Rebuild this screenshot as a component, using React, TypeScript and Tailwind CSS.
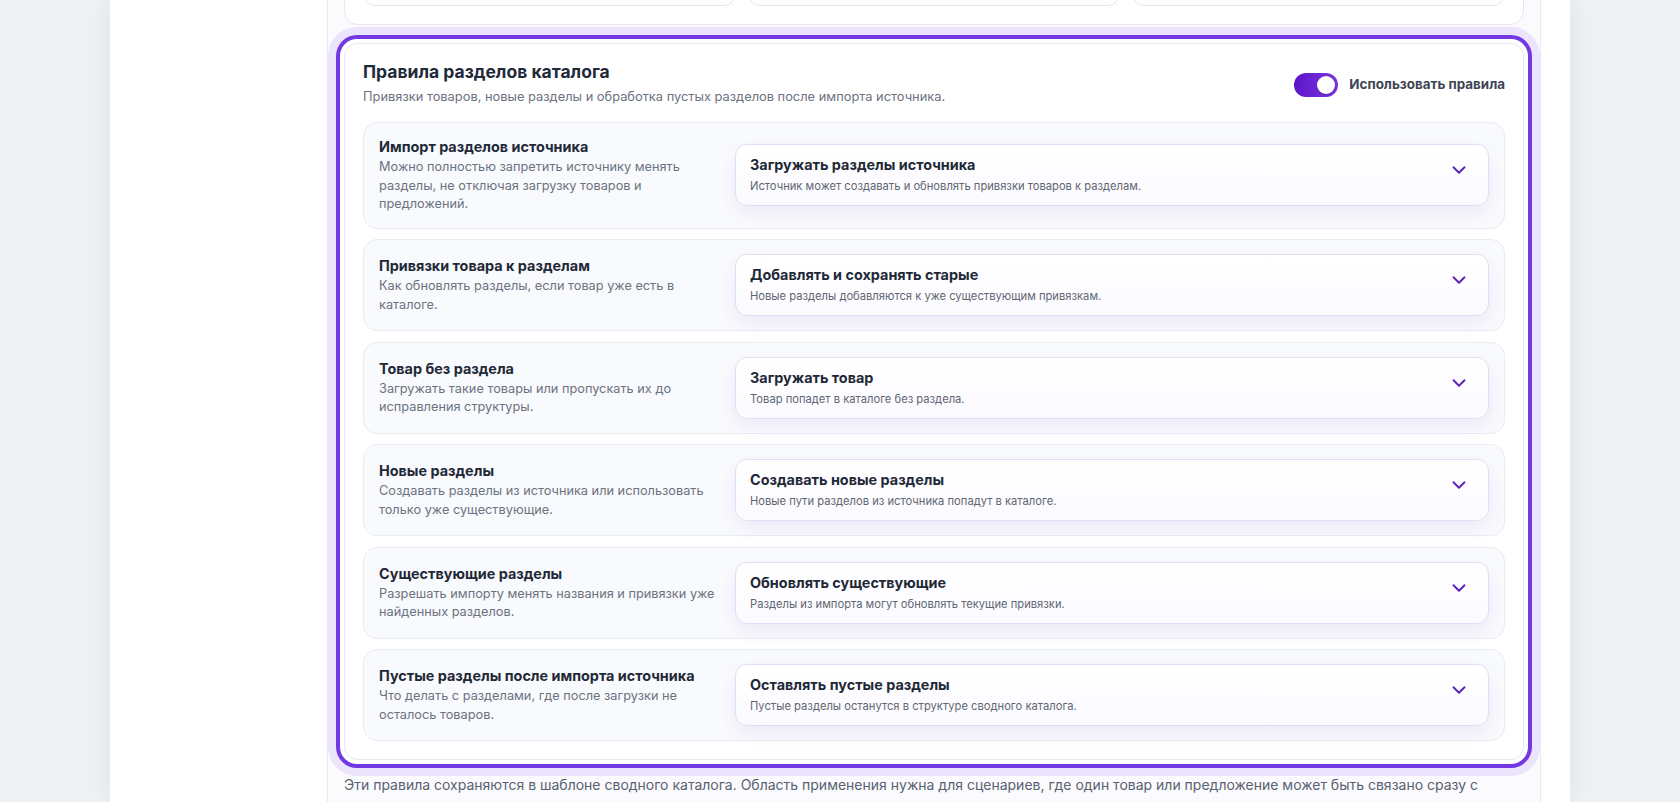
import { ChevronDown } from "lucide-react";

type Rule = {
  title: string;
  desc: string;
  value: string;
  hint: string;
};

const rules: Rule[] = [
  {
    title: "Импорт разделов источника",
    desc: "Можно полностью запретить источнику менять разделы, не отключая загрузку товаров и предложений.",
    value: "Загружать разделы источника",
    hint: "Источник может создавать и обновлять привязки товаров к разделам.",
  },
  {
    title: "Привязки товара к разделам",
    desc: "Как обновлять разделы, если товар уже есть в каталоге.",
    value: "Добавлять и сохранять старые",
    hint: "Новые разделы добавляются к уже существующим привязкам.",
  },
  {
    title: "Товар без раздела",
    desc: "Загружать такие товары или пропускать их до исправления структуры.",
    value: "Загружать товар",
    hint: "Товар попадет в каталоге без раздела.",
  },
  {
    title: "Новые разделы",
    desc: "Создавать разделы из источника или использовать только уже существующие.",
    value: "Создавать новые разделы",
    hint: "Новые пути разделов из источника попадут в каталоге.",
  },
  {
    title: "Существующие разделы",
    desc: "Разрешать импорту менять названия и привязки уже найденных разделов.",
    value: "Обновлять существующие",
    hint: "Разделы из импорта могут обновлять текущие привязки.",
  },
  {
    title: "Пустые разделы после импорта источника",
    desc: "Что делать с разделами, где после загрузки не осталось товаров.",
    value: "Оставлять пустые разделы",
    hint: "Пустые разделы останутся в структуре сводного каталога.",
  },
];

function RuleRow({ rule }: { rule: Rule }) {
  return (
    <div className="grid grid-cols-[340px_1fr] items-center gap-4 rounded-[14px] border border-[#e9ecf3] bg-[#f9fafd] px-[15px] py-[14px]">
      <div>
        <div className="text-[14.4px] font-bold leading-5 text-[#1f2937]">{rule.title}</div>
        <div className="mt-px text-[12.75px] leading-[18.5px] text-[#6b7280]">{rule.desc}</div>
      </div>
      <button
        type="button"
        className="flex items-start justify-between rounded-[12px] border border-[#e3dcf4] bg-gradient-to-b from-white to-[#fbfaff] py-[10px] pl-[14px] pr-[18px] text-left shadow-[0_8px_18px_rgba(91,33,182,0.07)]"
      >
        <div>
          <div className="text-[14.4px] font-bold leading-5 text-[#1f2937]">{rule.value}</div>
          <div className="mt-[3px] text-[11.2px] leading-[17px] text-[#5f6673]">{rule.hint}</div>
        </div>
        <ChevronDown className="mt-[4px] text-[#5b1fb8]" size={22} strokeWidth={2} />
      </button>
    </div>
  );
}

export default function App() {
  return (
    <div className="flex h-[802px] w-full justify-center overflow-hidden bg-[#eef1f4] font-['Inter','Noto_Sans',sans-serif]">
      <div className="flex w-[1460px] bg-white shadow-[0_0_22px_rgba(15,23,42,0.07)]">
        {/* sidebar area */}
        <aside className="w-[217px] shrink-0 bg-white" />

        {/* main settings column */}
        <main className="w-[1214px] shrink-0 border-x border-[#e8e9f2] bg-[#fbfbfe] px-4">
          {/* option cards block, scrolled partly out of view */}
          <section className="-mt-[73px] rounded-[14px] border border-[#e8e6f3] bg-white p-[18px]">
            <div className="grid grid-cols-3 gap-3">
              <div className="h-[60px] rounded-[12px] border border-[#e6e4ef] bg-white" />
              <div className="h-[60px] rounded-[12px] border border-[#e6e4ef] bg-white" />
              <div className="h-[60px] rounded-[12px] border border-[#e6e4ef] bg-white" />
            </div>
          </section>

          {/* catalog section rules */}
          <section className="mt-[18px] rounded-[13px] border border-[#ebe8f4] bg-white px-[18px] pb-[18px] pt-[17px] shadow-[0_0_0_16px_#ebe4fc] ring-4 ring-[#7438e2] ring-offset-4 ring-offset-white">
            <div className="flex items-center justify-between">
              <div>
                <h2 className="text-[17.5px] font-bold leading-[22px] text-[#1f2a3a]">Правила разделов каталога</h2>
                <p className="mt-[5px] text-[12.85px] leading-[18px] text-[#6b7280]">
                  Привязки товаров, новые разделы и обработка пустых разделов после импорта источника.
                </p>
              </div>
              <label className="mt-[2px] flex items-center gap-[11px]">
                <span className="flex h-6 w-11 items-center justify-end rounded-full bg-gradient-to-r from-[#5c12c8] to-[#7a36e0] p-[3px]">
                  <span className="h-[18px] w-[18px] rounded-full bg-white shadow-[0_1px_2px_rgba(0,0,0,0.2)]" />
                </span>
                <span className="text-[13.4px] font-bold text-[#3d4555]">Использовать правила</span>
              </label>
            </div>

            <div className="mt-4 flex flex-col gap-[10.5px]">
              {rules.map((r) => (
                <RuleRow key={r.title} rule={r} />
              ))}
            </div>
          </section>

          <p className="mt-[15px] text-[14px] leading-5 text-[#596170]">
            Эти правила сохраняются в шаблоне сводного каталога. Область применения нужна для сценариев, где один товар или
            предложение может быть связано сразу с несколькими источниками.
          </p>
        </main>
      </div>
    </div>
  );
}
